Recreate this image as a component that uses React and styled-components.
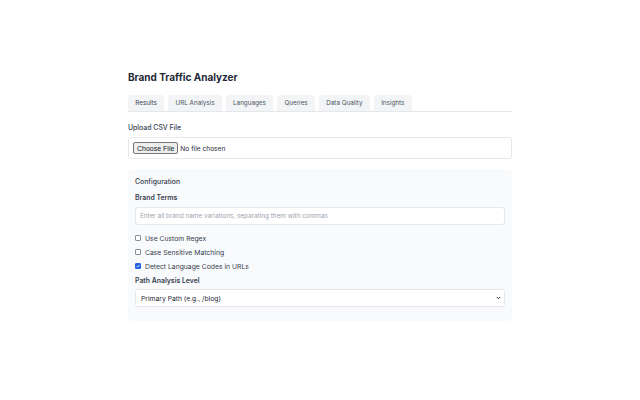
import React, { useState } from 'react';
import styled, { createGlobalStyle } from 'styled-components';

const GlobalStyle = createGlobalStyle`
  body {
    margin: 0;
    background: #ffffff;
    font-family: Inter, "Noto Sans", "Liberation Sans", sans-serif;
    color: #1f2937;
  }
`;

const Page = styled.div`
  width: 384px;
  margin: 0 auto;
  padding-top: 69px;
`;

const Title = styled.h1`
  margin: 0;
  font-size: 10px;
  line-height: 16px;
  font-weight: 700;
  color: #1f2937;
`;

const TabList = styled.div`
  display: flex;
  gap: 4px;
  margin-top: 10px;
  border-bottom: 1px solid #e5e7eb;
`;

const Tab = styled.button`
  height: 16px;
  padding: 0 7.3px;
  border: none;
  border-radius: 3px 3px 0 0;
  background: #f3f4f6;
  font-family: inherit;
  font-size: 6.3px;
  color: ${(p) => (p.$active ? '#374151' : '#4b5563')};
  cursor: pointer;
`;

const Section = styled.div`
  margin-top: 11px;
`;

const Label = styled.div`
  font-size: 6.9px;
  line-height: 10px;
  font-weight: ${(p) => (p.$strong ? 600 : 500)};
  color: #374151;
  margin-bottom: ${(p) => p.$gap ?? 4}px;
`;

const FileBox = styled.div`
  box-sizing: border-box;
  height: 22px;
  display: flex;
  align-items: center;
  padding: 0 4px;
  border: 1px solid #e5e7eb;
  border-radius: 3px;
  background: #ffffff;

  input {
    font-family: inherit;
    font-size: 6.6px;
    color: #1f2937;
  }

  input::file-selector-button {
    font-family: "Liberation Sans", Arial, sans-serif;
    font-size: 7px;
    height: 12px;
    padding: 0 3px;
    margin-right: 2px;
    color: #111827;
    background: #efefef;
    border: 1px solid #767676;
    border-radius: 2px;
  }
`;

const Panel = styled.div`
  margin-top: 10px;
  padding: 8px 7px 14px;
  background: #f9fafb;
  border-radius: 4px;
`;

const TextInput = styled.input`
  display: block;
  box-sizing: border-box;
  width: 100%;
  height: 18px;
  padding: 0 4px;
  border: 1px solid #e5e7eb;
  border-radius: 3px;
  background: #ffffff;
  font-family: inherit;
  font-size: 6.4px;
  color: #1f2937;
  outline: none;

  &::placeholder {
    color: #9ca3af;
  }
`;

const CheckList = styled.div`
  display: flex;
  flex-direction: column;
  margin: 6px 0 3px;
`;

const CheckRow = styled.label`
  display: flex;
  align-items: center;
  gap: 4px;
  height: 14px;
  font-size: 6.8px;
  color: #374151;
  cursor: pointer;

  input {
    display: none;
  }
`;

const Box = styled.span`
  box-sizing: border-box;
  width: 6px;
  height: 6px;
  display: flex;
  align-items: center;
  justify-content: center;
  border: 1px solid ${(p) => (p.$checked ? '#2563eb' : '#8b8f96')};
  border-radius: 1px;
  background: ${(p) => (p.$checked ? '#2563eb' : '#ffffff')};
`;

const SelectWrap = styled.div`
  position: relative;
`;

const Select = styled.select`
  display: block;
  box-sizing: border-box;
  width: 100%;
  height: 18px;
  padding: 0 5px;
  border: 1px solid #e5e7eb;
  border-radius: 3px;
  background: #ffffff;
  appearance: none;
  font-family: inherit;
  font-size: 6.75px;
  color: #1f2937;
  outline: none;
`;

const Chevron = styled.svg`
  position: absolute;
  right: 4px;
  top: 7px;
  width: 5px;
  height: 4px;
  pointer-events: none;
`;

const tabs = ['Results', 'URL Analysis', 'Languages', 'Queries', 'Data Quality', 'Insights'];

const Checkbox = ({ checked, onChange, children }) => (
  <CheckRow>
    <input type="checkbox" checked={checked} onChange={onChange} />
    <Box $checked={checked}>
      {checked && (
        <svg width="4" height="4" viewBox="0 0 8 8">
          <path d="M1.5 4.2 L3.3 6 L6.6 2" fill="none" stroke="#fff" strokeWidth="1.6" />
        </svg>
      )}
    </Box>
    {children}
  </CheckRow>
);

export default function App() {
  const [active, setActive] = useState('Results');
  const [checks, setChecks] = useState({ regex: false, caseSensitive: false, lang: true });

  const toggle = (key) => setChecks({ ...checks, [key]: !checks[key] });

  return (
    <>
      <GlobalStyle />
      <Page>
        <Title>Brand Traffic Analyzer</Title>
        <TabList>
          {tabs.map((t) => (
            <Tab key={t} $active={t === active} onClick={() => setActive(t)}>
              {t}
            </Tab>
          ))}
        </TabList>

        <Section>
          <Label $gap={4}>Upload CSV File</Label>
          <FileBox>
            <input type="file" accept=".csv" />
          </FileBox>
        </Section>

        <Panel>
          <Label $gap={6}>Configuration</Label>
          <Label $strong $gap={4}>Brand Terms</Label>
          <TextInput placeholder="Enter all brand name variations, separating them with commas" />
          <CheckList>
            <Checkbox checked={checks.regex} onChange={() => toggle('regex')}>
              Use Custom Regex
            </Checkbox>
            <Checkbox checked={checks.caseSensitive} onChange={() => toggle('caseSensitive')}>
              Case Sensitive Matching
            </Checkbox>
            <Checkbox checked={checks.lang} onChange={() => toggle('lang')}>
              Detect Language Codes in URLs
            </Checkbox>
          </CheckList>
          <Label $strong $gap={3}>Path Analysis Level</Label>
          <SelectWrap>
            <Select defaultValue="primary">
              <option value="primary">Primary Path (e.g., /blog)</option>
              <option value="secondary">Secondary Path (e.g., /blog/post)</option>
              <option value="full">Full Path</option>
            </Select>
            <Chevron viewBox="0 0 10 8">
              <path d="M1.5 2 L5 5.5 L8.5 2" fill="none" stroke="#1f2937" strokeWidth="1.8" />
            </Chevron>
          </SelectWrap>
        </Panel>
      </Page>
    </>
  );
}
